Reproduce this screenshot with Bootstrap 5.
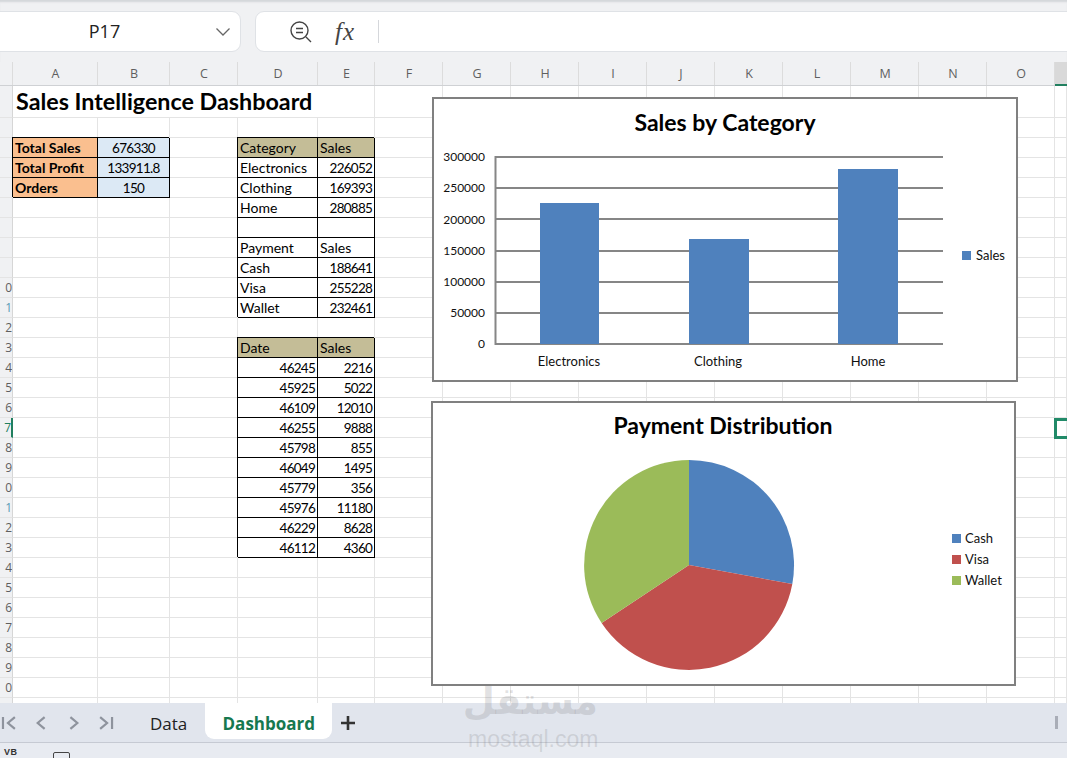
<!DOCTYPE html>
<html lang="en">
<head>
    <meta charset="UTF-8">
    <meta name="viewport" content="width=device-width, initial-scale=1.0">
    <title>Sales Intelligence Dashboard</title>
    <link href="https://cdn.jsdelivr.net/npm/bootstrap@5.3.0/dist/css/bootstrap.min.css" rel="stylesheet">
    <style>
        html, body { height: 100%; }
        body { background: #fff; color: #000; overflow: hidden; font-family: "Open Sans", "Liberation Sans", sans-serif; }
        .formula-strip { height: 62px; flex: none; background: #f0f1f3; padding-top: 11px; box-shadow: inset 0 3px 2px -1px #d3d6da; }
        .name-box, .formula-box { height: 41px; background: #fff; border: 1px solid #dfe2e6; border-radius: 9px; }
        .name-box { width: 251px; margin-left: -10px; font-size: 18px; color: #222; }
        .name-box span { flex: 1; text-align: center; padding-left: 3px; }
        .name-box svg { margin-right: 9px; }
        .formula-box { flex: 1; margin-left: 14px; margin-right: -12px; padding-left: 33px; }
        .fx-mark { font-family: "Liberation Serif", serif; font-style: italic; font-size: 25px; color: #444; width: 28px; margin-left: 22px; line-height: 1; letter-spacing: 1px; }
        .fx-sep { width: 1px; height: 23px; background: #d5d7db; margin-left: 15px; }

        .col-heads { height: 24px; flex: none; background: #f0f1f3; border-bottom: 1px solid #cfd1d4; font-size: 12.5px; color: #5f5f5f; }
        .col-heads > div { flex: none; text-align: center; line-height: 24px; padding-left: 1px; border-right: 1px solid #dcdcdc; }
        .col-heads > .col-on { background: #d9d9d9; border-right: 0; border-bottom: 2px solid #217f5f; height: 24px; }

        .sheet-area { height: 617px; flex: none; overflow: hidden; position: relative; }
        .sheet-grid { border-collapse: separate; border-spacing: 0; table-layout: fixed; width: 1067px; font-family: Lato, "Liberation Sans", sans-serif; font-size: 14px; }
        .sheet-grid td { height: 20px; padding: 1px 2px 0; border-right: 1px solid #e4e4e4; border-bottom: 1px solid #e4e4e4; line-height: 18px; white-space: nowrap; overflow: hidden; }
        .sheet-grid tr.title-row td { height: 32px; padding-top: 0; }
        .sheet-grid td.row-num { background: #f0f1f3; padding: 1px 0 0; border-right: 1px solid #d6d6d6; text-align: right; font-family: "Open Sans", sans-serif; font-size: 12px; color: #5f5f5f; direction: rtl; }
        .sheet-grid td.row-on { border-right: 2px solid #217f5f; color: #217f5f; }
        .sheet-grid td.row-tint { color: #5b9bb5; }
        .sheet-grid td.title-cell { font-size: 23.3px; font-weight: 700; padding-left: 3px; line-height: 29px; }
        .sheet-grid td.boxed { border-right-color: #000; border-bottom-color: #000; box-shadow: -1px -1px 0 #000; }
        .sheet-grid td.fill-orange { background: #fabf8f; font-weight: 700; }
        .sheet-grid td.fill-blue { background: #dce9f5; text-align: center; font-size: 13.5px; letter-spacing: -.7px; }
        .sheet-grid td.fill-khaki { background: #c4bd97; }
        .sheet-grid td.num { text-align: right; font-size: 13.5px; letter-spacing: -.75px; }

        .chart-box { position: absolute; background: #fff; border: 2px solid #808080; }
        .chart-box svg { display: block; position: absolute; left: -2px; top: -2px; font-family: Lato, "Liberation Sans", sans-serif; font-size: 13px; fill: #111; }
        .chart-title { font-size: 23px; font-weight: 700; text-anchor: middle; fill: #000; }
        .axis-nums { font-size: 12px; }
        .cell-cursor { position: absolute; left: 1054px; top: 332px; width: 30px; height: 21px; border: 3px solid #218a68; }

        .tab-strip { height: 40px; flex: none; background: #e1e5ed; border-bottom: 1px solid #c6cad3; }
        .tab-nav { width: 118px; padding-left: 1px; }
        .tab-nav svg { display: block; }
        .sheet-tab { font-size: 17px; color: #222; padding: 0 19px; height: 36px; margin-left: 13px; line-height: 41px; }
        .sheet-tab-on { background: #fff; color: #16784f; font-weight: 700; border-radius: 0 0 9px 9px; margin-left: -1px; width: 127px; padding: 0; text-align: center; }
        .tab-plus { margin-left: 8px; }
        .tab-grip { width: 3px; height: 13px; background: #a9adb7; margin-left: auto; margin-right: 9px; }
        .status-strip { height: 15px; flex: none; background: #e8ebf1; overflow: hidden; }
        .vb-mark { font-family: "Liberation Sans", sans-serif; font-size: 9px; font-weight: 700; color: #333; line-height: 1; margin: 5px 0 0 4px; letter-spacing: .5px; }
        .status-square { width: 17px; height: 12px; border: 1.5px solid #444; border-radius: 2px; margin: 9px 0 0 35px; }

        .stamp { position: absolute; left: 468px; top: 676px; width: 130px; text-align: center; color: rgba(125,125,130,.22); pointer-events: none; white-space: nowrap; }
        .stamp-ar { font-family: "DejaVu Sans", sans-serif; font-weight: 700; font-size: 37px; line-height: 52px; height: 50px; }
        .stamp-en { font-family: "Liberation Sans", sans-serif; font-size: 23px; line-height: 26px; }
    </style>
</head>
<body class="d-flex flex-column position-relative">
    <div class="formula-strip d-flex">
        <div class="name-box d-flex align-items-center">
            <span>P17</span>
            <svg width="16" height="10" viewBox="0 0 16 10"><path d="M1.500 1.500 8 8l6.500-6.500" fill="none" stroke="#666" stroke-width="1.300"/></svg>
        </div>
        <div class="formula-box d-flex align-items-center">
            <svg width="24" height="24" viewBox="0 0 24 24"><circle cx="10.500" cy="10.500" r="8.500" fill="none" stroke="#444" stroke-width="1.400"/><path d="M7 8.500h7M7 12.500h7M17 17l5 5" fill="none" stroke="#444" stroke-width="1.400"/></svg>
            <span class="fx-mark">fx</span>
            <span class="fx-sep"></span>
        </div>
    </div>

    <div class="col-heads d-flex" id="colHeads"></div>

    <div class="sheet-area">
        <table class="sheet-grid"><colgroup id="gridCols"></colgroup><tbody id="gridBody"></tbody></table>

        <div class="chart-box" style="left:432px;top:11px;width:586px;height:285px">
            <svg width="586" height="285" viewBox="432 97 586 285">
                <text class="chart-title" x="725" y="131">Sales by Category</text>
                <g stroke="#868686" stroke-width="2">
                    <path d="M495 157H943M495 188H943M495 219H943M495 251H943M495 282H943M495 313H943M495 344H943M495.500 156V345" fill="none"/>
                </g>
                <g fill="#4f81bd">
                    <rect x="540" y="203" width="59" height="141"/>
                    <rect x="689" y="239" width="60" height="105"/>
                    <rect x="838" y="169" width="60" height="175"/>
                </g>
                <g text-anchor="end" class="axis-nums">
                    <text x="485" y="161">300000</text>
                    <text x="485" y="192">250000</text>
                    <text x="485" y="224">200000</text>
                    <text x="485" y="255">150000</text>
                    <text x="485" y="286">100000</text>
                    <text x="485" y="317">50000</text>
                    <text x="485" y="348">0</text>
                </g>
                <g text-anchor="middle">
                    <text x="569" y="366">Electronics</text>
                    <text x="718" y="366">Clothing</text>
                    <text x="868" y="366">Home</text>
                </g>
                <rect x="962" y="251" width="9" height="9" fill="#4f81bd"/>
                <text x="976" y="260">Sales</text>
            </svg>
        </div>

        <div class="chart-box" style="left:431px;top:315px;width:585px;height:285px">
            <svg width="585" height="285" viewBox="431 401 585 285">
                <text class="chart-title" x="723" y="434">Payment Distribution</text>
                <path d="M689 565V460A105 105 0 0 1 792.300 584Z" fill="#4f81bd"/>
                <path d="M689 565 792.300 584A105 105 0 0 1 601.600 623Z" fill="#c0504d"/>
                <path d="M689 565 601.600 623A105 105 0 0 1 689 460Z" fill="#9bbb59"/>
                <rect x="952" y="534" width="9" height="9" fill="#4f81bd"/>
                <rect x="952" y="555" width="9" height="9" fill="#c0504d"/>
                <rect x="952" y="576" width="9" height="9" fill="#9bbb59"/>
                <text x="965" y="543">Cash</text>
                <text x="965" y="564">Visa</text>
                <text x="965" y="585">Wallet</text>
            </svg>
        </div>

        <div class="cell-cursor"></div>
    </div>

    <div class="tab-strip d-flex align-items-start">
        <div class="tab-nav d-flex align-self-center">
            <svg width="118" height="18" viewBox="0 0 118 18" fill="none" stroke="#8e939d" stroke-width="2.200">
                <path d="M2 3v12M14 3 7 9l7 6M44 3l-7 6 7 6M70 3l7 6-7 6M100 3l7 6-7 6M112 3v12"/>
            </svg>
        </div>
        <div class="sheet-tab">Data</div>
        <div class="sheet-tab sheet-tab-on">Dashboard</div>
        <svg class="tab-plus align-self-center" width="16" height="16" viewBox="0 0 16 16"><path d="M8 1v14M1 8h14" stroke="#333" stroke-width="2.600"/></svg>
        <div class="tab-grip align-self-center"></div>
    </div>
    <div class="status-strip d-flex">
        <div class="vb-mark">VB</div>
        <div class="status-square"></div>
    </div>

    <div class="stamp">
        <div class="stamp-ar" dir="rtl" lang="ar">مستقل</div>
        <div class="stamp-en">mostaql.com</div>
    </div>

    <script>
        // column letters and widths as they sit in the sheet
        const cols = [["", 13], ["A", 85], ["B", 72], ["C", 68], ["D", 80], ["E", 57], ["F", 68], ["G", 68], ["H", 68],
            ["I", 68], ["J", 68], ["K", 68], ["L", 68], ["M", 68], ["N", 68], ["O", 68], ["", 12]];

        document.getElementById("colHeads").innerHTML = cols.map(([name, w], i) =>
            `<div class="${i === cols.length - 1 ? "col-on" : ""}" style="width:${w}px">${name}</div>`).join("");
        document.getElementById("gridCols").innerHTML = cols.map(([, w]) => `<col style="width:${w}px">`).join("");

        // cells with content, key is row number, then column index (1 = A)
        const cells = {
            3: {1: ["Total Sales", "boxed fill-orange"], 2: ["676330", "boxed fill-blue"], 4: ["Category", "boxed fill-khaki"], 5: ["Sales", "boxed fill-khaki"]},
            4: {1: ["Total Profit", "boxed fill-orange"], 2: ["133911.8", "boxed fill-blue"], 4: ["Electronics", "boxed"], 5: ["226052", "boxed num"]},
            5: {1: ["Orders", "boxed fill-orange"], 2: ["150", "boxed fill-blue"], 4: ["Clothing", "boxed"], 5: ["169393", "boxed num"]},
            6: {4: ["Home", "boxed"], 5: ["280885", "boxed num"]},
            7: {4: ["", "boxed"], 5: ["", "boxed"]},
            8: {4: ["Payment", "boxed"], 5: ["Sales", "boxed"]},
            9: {4: ["Cash", "boxed"], 5: ["188641", "boxed num"]},
            10: {4: ["Visa", "boxed"], 5: ["255228", "boxed num"]},
            11: {4: ["Wallet", "boxed"], 5: ["232461", "boxed num"]},
            13: {4: ["Date", "boxed fill-khaki"], 5: ["Sales", "boxed fill-khaki"]}
        };
        [[46245, 2216], [45925, 5022], [46109, 12010], [46255, 9888], [45798, 855],
         [46049, 1495], [45779, 356], [45976, 11180], [46229, 8628], [46112, 4360]].forEach((r, i) => {
            cells[14 + i] = {4: [r[0], "boxed num"], 5: [r[1], "boxed num"]};
        });

        let html = "";
        for (let row = 1; row <= 31; row++) {
            let numClass = "row-num";
            if (row === 17) numClass += " row-on";
            if (row === 11 || row === 21) numClass += " row-tint";
            // only the last digit fits in the clipped header, single digits are hidden
            html += `<tr class="${row === 1 ? "title-row" : ""}"><td class="${numClass}">${row >= 10 && row < 31 ? row % 10 : ""}</td>`;
            if (row === 1) {
                html += `<td class="title-cell" colspan="5">Sales Intelligence Dashboard</td>`;
                for (let c = 6; c < cols.length; c++) html += "<td></td>";
            } else {
                for (let c = 1; c < cols.length; c++) {
                    const cell = cells[row] && cells[row][c];
                    html += cell ? `<td class="${cell[1]}">${cell[0]}</td>` : "<td></td>";
                }
            }
            html += "</tr>";
        }
        document.getElementById("gridBody").innerHTML = html;
    </script>
    <script src="https://cdn.jsdelivr.net/npm/bootstrap@5.3.0/dist/js/bootstrap.bundle.min.js"></script>
</body>
</html>
